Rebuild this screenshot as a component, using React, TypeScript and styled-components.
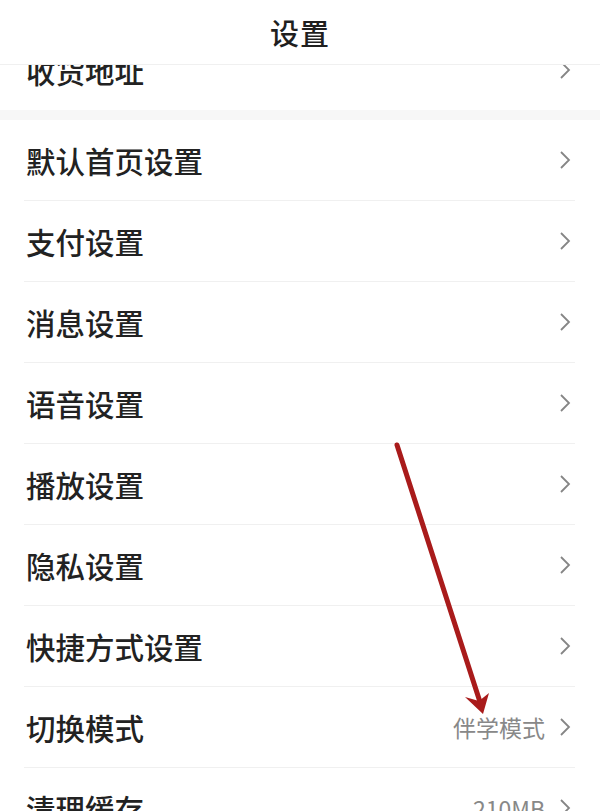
import React from 'react';
import styled, { createGlobalStyle } from 'styled-components';

const GlobalStyle = createGlobalStyle`
  html, body {
    margin: 0;
    padding: 0;
    background: #ffffff;
  }
  body {
    font-family: "Noto Sans CJK SC", "Noto Sans", sans-serif;
    -webkit-font-smoothing: antialiased;
  }
`;

const Page = styled.div`
  position: relative;
  width: 600px;
  height: 811px;
  overflow: hidden;
  background: #fff;
  display: flex;
  flex-direction: column;
`;

const Header = styled.div`
  height: 64px;
  flex-shrink: 0;
  display: flex;
  align-items: center;
  justify-content: center;
  border-bottom: 1px solid #f0f0f0;
  background: #fff;
  position: relative;
  z-index: 2;
`;

const Title = styled.h1`
  margin: 0;
  font-size: 29px;
  font-weight: 500;
  color: #1f1f1f;
  letter-spacing: 1px;
`;

const Scroll = styled.div`
  flex: 1;
  overflow: hidden;
`;

const ScrollInner = styled.div`
  margin-top: -35px;
`;

const Section = styled.div`
  background: #fff;
`;

const Gap = styled.div`
  height: 10px;
  background: #f7f7f7;
`;

const Row = styled.div`
  padding: 0 25px 0 24px;
`;

const RowInner = styled.div<{ $last?: boolean }>`
  height: 80px;
  display: flex;
  align-items: center;
  justify-content: space-between;
  border-bottom: ${({ $last }) => ($last ? 'none' : '1px solid #f0f0f0')};
`;

const Label = styled.span`
  font-size: 29.5px;
  font-weight: 500;
  color: #222;
  padding-left: 2px;
`;

const Right = styled.div`
  display: flex;
  align-items: center;
  gap: 14px;
  padding-right: 4px;
`;

const Value = styled.span`
  font-size: 23px;
  color: #888;
  font-family: "Noto Sans CJK SC", "Liberation Sans", sans-serif;
`;

const ArrowLayer = styled.svg`
  position: absolute;
  left: 0;
  top: 0;
  pointer-events: none;
  z-index: 3;
`;

const Chevron = () => (
  <svg width="12" height="20" viewBox="0 0 12 20">
    <polyline points="2,2 10,10 2,18" fill="none" stroke="#858585" strokeWidth="1.8" />
  </svg>
);

type Item = { label: string; value?: string };

const topItems: Item[] = [{ label: '收货地址' }];

const items: Item[] = [
  { label: '默认首页设置' },
  { label: '支付设置' },
  { label: '消息设置' },
  { label: '语音设置' },
  { label: '播放设置' },
  { label: '隐私设置' },
  { label: '快捷方式设置' },
  { label: '切换模式', value: '伴学模式' },
  { label: '清理缓存', value: '210MB' },
];

const SettingRow: React.FC<{ item: Item; last?: boolean }> = ({ item, last }) => (
  <Row>
    <RowInner $last={last}>
      <Label>{item.label}</Label>
      <Right>
        {item.value && <Value>{item.value}</Value>}
        <Chevron />
      </Right>
    </RowInner>
  </Row>
);

export default function App() {
  return (
    <Page>
      <GlobalStyle />
      <Header>
        <Title>设置</Title>
      </Header>
      <Scroll>
        <ScrollInner>
          <Section>
            {topItems.map((it, i) => (
              <SettingRow key={it.label} item={it} last={i === topItems.length - 1} />
            ))}
          </Section>
          <Gap />
          <Section>
            {items.map((it) => (
              <SettingRow key={it.label} item={it} />
            ))}
          </Section>
        </ScrollInner>
      </Scroll>
      <ArrowLayer width="600" height="811" viewBox="0 0 600 811">
        <line x1="397" y1="445" x2="480" y2="702" stroke="#a91b1b" strokeWidth="5" strokeLinecap="round" />
        <polygon points="483,714 465,697 479,701 489,693" fill="#a91b1b" />
      </ArrowLayer>
    </Page>
  );
}
